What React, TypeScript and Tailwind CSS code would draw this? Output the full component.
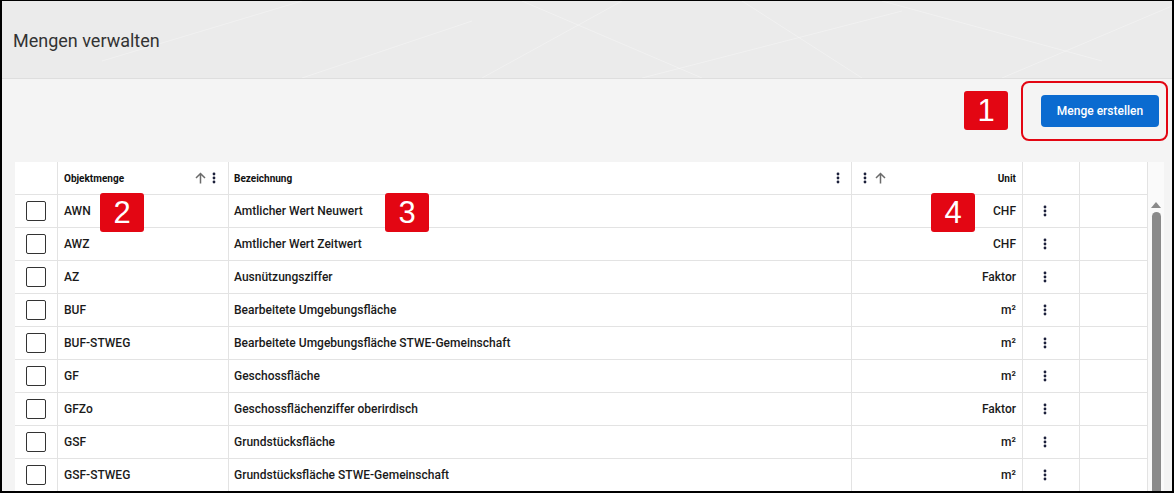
import React from "react";

const rows = [
  ["AWN", "Amtlicher Wert Neuwert", "CHF"],
  ["AWZ", "Amtlicher Wert Zeitwert", "CHF"],
  ["AZ", "Ausnützungsziffer", "Faktor"],
  ["BUF", "Bearbeitete Umgebungsfläche", "m²"],
  ["BUF-STWEG", "Bearbeitete Umgebungsfläche STWE-Gemeinschaft", "m²"],
  ["GF", "Geschossfläche", "m²"],
  ["GFZo", "Geschossflächenziffer oberirdisch", "Faktor"],
  ["GSF", "Grundstücksfläche", "m²"],
  ["GSF-STWEG", "Grundstücksfläche STWE-Gemeinschaft", "m²"],
];

function Kebab() {
  return (
    <svg width="4" height="12" viewBox="0 0 4 12" className="shrink-0">
      <circle cx="2" cy="2" r="1.4" fill="#1b1f3a" />
      <circle cx="2" cy="6" r="1.4" fill="#1b1f3a" />
      <circle cx="2" cy="10" r="1.4" fill="#1b1f3a" />
    </svg>
  );
}

function ArrowUp() {
  return (
    <svg width="11" height="12" viewBox="0 0 11 12" className="shrink-0">
      <path d="M5.5 11.5V1.5M1 6L5.5 1.5L10 6" stroke="#6b6b6b" strokeWidth="1.5" fill="none" />
    </svg>
  );
}

function Badge({ n, className }: { n: string; className: string }) {
  return (
    <div
      className={`absolute flex h-[39px] w-[44px] items-center justify-center rounded-[3px] bg-[#e30613] text-[31px] leading-none text-white ${className}`}
      style={{ fontFamily: '"Liberation Sans", Arial, sans-serif' }}
    >
      {n}
    </div>
  );
}

const cols = "grid grid-cols-[43px_171px_623px_171px_57px_68px]";

export default function App() {
  return (
    <div
      className="relative h-[493px] w-[1174px] overflow-hidden border-t border-l-2 border-r-2 border-b-2 border-black bg-[#f4f4f4] text-[#1a1a1a]"
      style={{ fontFamily: 'Roboto, "Noto Sans", sans-serif' }}
    >
      {/* Header */}
      <div className="relative flex h-[78px] items-center border-b border-[#dedede] bg-[#ebebeb] pl-[11px]">
        <svg className="absolute inset-0" width="1170" height="77" viewBox="0 0 1170 77">
          <g stroke="#ffffff" strokeOpacity="0.3" strokeWidth="1" fill="none">
            <path d="M480 77 L620 0" />
            <path d="M520 0 L700 77" />
            <path d="M640 77 L900 10" />
            <path d="M740 0 L860 77" />
            <path d="M300 77 L470 20" />
            <path d="M880 0 L1100 60" />
            <path d="M1000 77 L1170 5" />
            <path d="M100 60 L300 0" />
          </g>
        </svg>
        <h1 className="relative mt-[2px] text-[18px] font-normal text-[#333]">Mengen verwalten</h1>
      </div>

      {/* Toolbar */}
      <div className="flex h-[83px] items-start justify-end pr-[13px] pt-[16px]">
        <button className="h-[32px] w-[118px] rounded-[4px] bg-[#0b6bd0] text-[12px] font-medium text-white">
          Menge erstellen
        </button>
      </div>

      {/* Table area */}
      <div className="flex pl-[13px]">
        <div className="w-[1133px] bg-white">
          <div className={`${cols} h-[33px] border-b border-[#e3e3e3] text-[10px] font-bold text-[#111]`}>
            <div className="border-r border-[#e3e3e3]" />
            <div className="flex items-center justify-between border-r border-[#e3e3e3] pl-[6px] pr-[12px]">
              <span>Objektmenge</span>
              <div className="flex items-center gap-[6px]">
                <ArrowUp />
                <Kebab />
              </div>
            </div>
            <div className="flex items-center justify-between border-r border-[#e3e3e3] pl-[5px] pr-[11px]">
              <span>Bezeichnung</span>
              <Kebab />
            </div>
            <div className="flex items-center justify-between border-r border-[#e3e3e3] pl-[11px] pr-[6px]">
              <div className="flex items-center gap-[8px]">
                <Kebab />
                <ArrowUp />
              </div>
              <span>Unit</span>
            </div>
            <div className="border-r border-[#e3e3e3]" />
            <div className="border-r border-[#e3e3e3]" />
          </div>
          {rows.map(([code, name, unit]) => (
            <div key={code} className={`${cols} h-[33px] border-b border-[#e3e3e3] text-[12px] font-medium`}>
              <div className="flex items-center border-r border-[#e3e3e3] pl-[11px]">
                <div className="h-[20px] w-[20px] rounded-[2px] border-[1.5px] border-[#333]" />
              </div>
              <div className="flex items-center border-r border-[#e3e3e3] pl-[6px]">{code}</div>
              <div className="flex items-center border-r border-[#e3e3e3] pl-[5px]">{name}</div>
              <div className="flex items-center justify-end border-r border-[#e3e3e3] pr-[6px]">{unit}</div>
              <div className="flex items-center border-r border-[#e3e3e3] pl-[20px]">
                <Kebab />
              </div>
              <div className="border-r border-[#e3e3e3]" />
            </div>
          ))}
        </div>
        {/* Scrollbar */}
        <div className="flex w-[16px] flex-col items-center bg-[#fafafa] pt-[39px]">
          <svg width="10" height="7" viewBox="0 0 10 7">
            <path d="M0 7 L5 1 L10 7 Z" fill="#8a8a8a" />
          </svg>
          <div className="mt-[4px] w-[9px] flex-1 rounded-t-[5px] bg-[#8a8a8a]" />
        </div>
      </div>

      {/* Annotations */}
      <div className="absolute left-[1019px] top-[80px] h-[60px] w-[147px] rounded-[8px] border-2 border-[#e30613]" />
      <Badge n="1" className="left-[962px] top-[90px]" />
      <Badge n="2" className="left-[98px] top-[192px]" />
      <Badge n="3" className="left-[383px] top-[192px]" />
      <Badge n="4" className="left-[929px] top-[192px]" />
    </div>
  );
}
